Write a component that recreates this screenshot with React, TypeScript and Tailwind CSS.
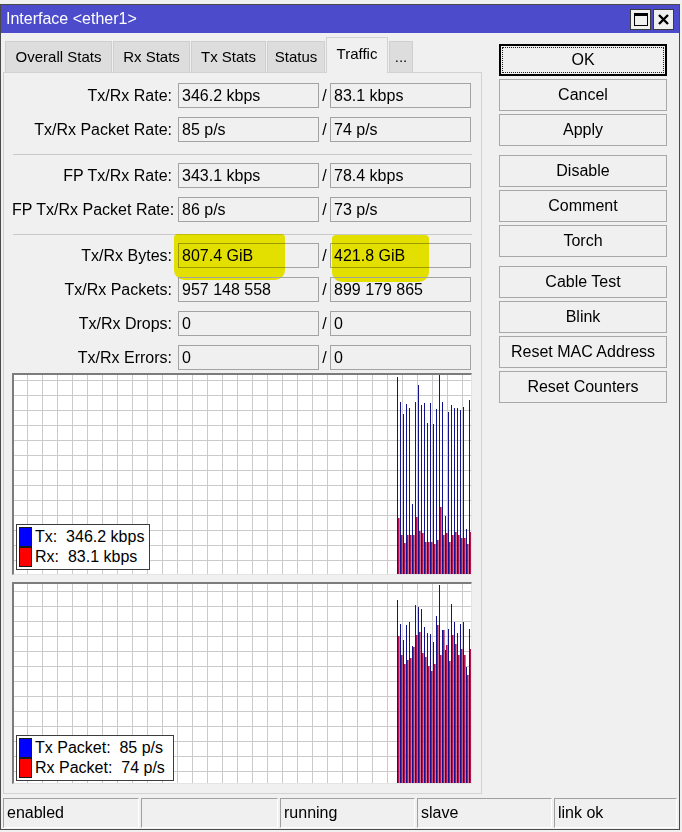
import React from 'react';

const FONT = { fontFamily: '"Liberation Sans", Arial, sans-serif' };

type Row = [string, string, string];

const groups: Row[][] = [
  [
    ['Tx/Rx Rate:', '346.2 kbps', '83.1 kbps'],
    ['Tx/Rx Packet Rate:', '85 p/s', '74 p/s'],
  ],
  [
    ['FP Tx/Rx Rate:', '343.1 kbps', '78.4 kbps'],
    ['FP Tx/Rx Packet Rate:', '86 p/s', '73 p/s'],
  ],
  [
    ['Tx/Rx Bytes:', '807.4 GiB', '421.8 GiB'],
    ['Tx/Rx Packets:', '957 148 558', '899 179 865'],
    ['Tx/Rx Drops:', '0', '0'],
    ['Tx/Rx Errors:', '0', '0'],
  ],
];

const tabs = [
  { label: 'Overall Stats', w: 'w-[107px]' },
  { label: 'Rx Stats', w: 'w-[77px]' },
  { label: 'Tx Stats', w: 'w-[75px]' },
  { label: 'Status', w: 'w-[58px]' },
  { label: 'Traffic', w: 'w-[62px]', active: true },
  { label: '...', w: 'w-[24px]' },
];

// absolute y of the bar tops, read from the screenshot
const rate = {
  top: 373,
  gridY: 5,
  tx: [377, 402, 414, 404, 408, 504, 402, 385, 405, 403, 423, 403, 424, 409, 375, 402, 516, 412, 405, 408, 408, 410, 407, 529, 400],
  rx: [518, 535, 543, 535, 535, 535, 517, 531, 533, 542, 542, 542, 544, 540, 507, 535, 533, 542, 535, 532, 535, 538, 538, 544, 532],
};

const packets = {
  top: 582,
  gridY: 7,
  tx: [600, 624, 640, 625, 622, 646, 605, 607, 609, 627, 633, 634, 642, 616, 585, 630, 650, 629, 604, 622, 633, 624, 622, 667, 629],
  rx: [636, 655, 664, 660, 658, 647, 635, 632, 653, 657, 666, 671, 664, 625, 655, 630, 645, 661, 635, 644, 655, 649, 655, 675, 649],
};

const Field: React.FC<{ row: Row; mark?: boolean }> = ({ row, mark }) => (
  <div className="flex h-[25px] items-center">
    <div className="w-[160px] whitespace-nowrap text-right text-[16px] text-black">{row[0]}</div>
    <div className="relative ml-[6px] h-[25px] w-[141px] border border-[#a3a3a3] px-[3px] text-[16px] leading-[23px] text-black">
      {mark && (
        <div className="absolute left-[-5px] top-[-10px] h-[46px] w-[111px] rounded-b-[10px] rounded-t-[4px] bg-[#f2ee00] mix-blend-multiply" />
      )}
      <span className="relative">{row[1]}</span>
    </div>
    <div className="w-[11px] text-center text-[16px] text-black">/</div>
    <div className="relative h-[25px] w-[141px] border border-[#a3a3a3] px-[3px] text-[16px] leading-[23px] text-black">
      {mark && (
        <div className="absolute left-[1px] top-[-9px] h-[47px] w-[97px] rounded-b-[10px] rounded-t-[4px] bg-[#f2ee00] mix-blend-multiply" />
      )}
      <span className="relative">{row[2]}</span>
    </div>
  </div>
);

const Graph: React.FC<{
  data: { top: number; gridY: number; tx: number[]; rx: number[] };
  legend: [string, string];
  legendW: string;
  legendPos: string;
}> = ({ data, legend, legendW, legendPos }) => {
  const W = 457;
  const H = 199;
  const origin = data.top + 2;
  const vLines = [];
  for (let x = 13; x < W; x += 15) vLines.push(x);
  const hLines = [];
  for (let y = data.gridY; y < H; y += 15) hLines.push(y);

  return (
    <div className="relative h-[202px] w-[460px] border-l-2 border-t-2 border-b border-r border-l-[#7c7c7c] border-t-[#7c7c7c] border-b-[#e4e4e4] border-r-[#e4e4e4] bg-white">
      <svg width={W} height={H} className="block">
        {vLines.map((x) => (
          <line key={'v' + x} x1={x + 0.5} y1={0} x2={x + 0.5} y2={H} stroke="#cbcbcb" strokeWidth={1} />
        ))}
        {hLines.map((y) => (
          <line key={'h' + y} x1={0} y1={y + 0.5} x2={W} y2={y + 0.5} stroke="#cbcbcb" strokeWidth={1} />
        ))}
        {data.tx.map((t, i) => {
          const x = 383 + i * 3;
          const rxTop = data.rx[i] - origin;
          return (
            <g key={i}>
              <rect x={x} y={t - origin} width={1} height={H - (t - origin)} fill="#12128a" />
              <rect x={x + 1} y={rxTop} width={1.6} height={H - rxTop} fill="#b3144f" />
            </g>
          );
        })}
      </svg>
      <div className={`absolute left-[2px] ${legendPos} ${legendW} border border-[#3c3c3c] bg-white py-[2px] pl-[2px]`}>
        {legend.map((l, i) => (
          <div key={l} className="flex h-[20px] items-center">
            <div className={`h-[20px] w-[13px] border border-[#1a1a1a] ${i === 0 ? 'bg-[#0000ff]' : 'bg-[#ff0000]'}`} />
            <span className="ml-[3px] whitespace-pre text-[16px] leading-[20px] text-black">{l}</span>
          </div>
        ))}
      </div>
    </div>
  );
};

const Btn: React.FC<{ label: string; focus?: boolean; extra?: string }> = ({ label, focus, extra }) =>
  focus ? (
    <div className={`relative flex h-[32px] w-[168px] items-center justify-center border-2 border-black bg-[#f0f0f0] text-[16px] text-black ${extra ?? ''}`}>
      <div className="absolute inset-[1px] border border-dotted border-[#202020]" />
      <span className="relative">{label}</span>
    </div>
  ) : (
    <div className={`flex h-[32px] w-[168px] items-center justify-center border border-[#a8a8a8] bg-[#f0f0f0] text-[16px] text-black ${extra ?? ''}`}>
      {label}
    </div>
  );

export default function App() {
  return (
    <div className="h-[832px] w-[682px] bg-[#f0f0f0] pt-[4px]" style={FONT}>
      <div className="flex h-[826px] w-[680px] flex-col border border-[#4a4a4a] bg-[#f0f0f0]">
        {/* Title bar */}
        <div className="flex h-[28px] items-center justify-between bg-[#4b4bcb] pl-[5px] pr-[5px]">
          <span className="text-[16px] text-white">Interface &lt;ether1&gt;</span>
          <div className="flex gap-[2px]">
            <div className="flex h-[21px] w-[21px] items-center justify-center border border-[#3a3a3a] bg-[#f0f0f0]">
              <div className="h-[13px] w-[14px] border border-t-[3px] border-black" />
            </div>
            <div className="flex h-[21px] w-[21px] items-center justify-center border border-[#3a3a3a] bg-[#f0f0f0]">
              <svg width="13" height="13" viewBox="0 0 13 13">
                <path d="M2 2 L11 11 M11 2 L2 11" stroke="#000" strokeWidth="2.4" />
              </svg>
            </div>
          </div>
        </div>

        {/* Body */}
        <div className="flex flex-1">
          <div className="flex w-[481px] flex-col">
            {/* Tabs */}
            <div className="ml-[4px] mt-[4px] flex h-[35px] items-end gap-[1px]">
              {tabs.map((t) =>
                t.active ? (
                  <div
                    key={t.label}
                    className={`relative z-10 -mb-[1px] flex h-[36px] ${t.w} items-center justify-center border border-b-0 border-[#d2d2d2] bg-[#f0f0f0] pb-[2px] text-[15px] text-black`}
                  >
                    {t.label}
                  </div>
                ) : (
                  <div
                    key={t.label}
                    className={`flex h-[31px] ${t.w} items-center justify-center border border-b-0 border-[#cfcfcf] bg-[#dddddd] text-[15px] text-black`}
                  >
                    {t.label}
                  </div>
                )
              )}
            </div>

            {/* Panel */}
            <div className="ml-[2px] flex h-[722px] w-[479px] flex-col border border-[#d2d2d2] bg-[#f0f0f0] pl-[8px] pt-[10px]">
              {groups.map((g, gi) => (
                <React.Fragment key={gi}>
                  {gi > 0 && <div className="mb-[8px] ml-[1px] mt-[12px] h-[1px] w-[459px] bg-[#c9c9c9]" />}
                  <div className="flex flex-col gap-[9px]">
                    {g.map((r) => (
                      <Field key={r[0]} row={r} mark={r[0] === 'Tx/Rx Bytes:'} />
                    ))}
                  </div>
                </React.Fragment>
              ))}
              <div className="mt-[3px] flex flex-col gap-[7px]">
                <Graph data={rate} legend={['Tx:  346.2 kbps', 'Rx:  83.1 kbps']} legendW="w-[134px]" legendPos="bottom-[4px]" />
                <Graph data={packets} legend={['Tx Packet:  85 p/s', 'Rx Packet:  74 p/s']} legendW="w-[158px]" legendPos="bottom-[2px]" />
              </div>
            </div>
          </div>

          {/* Buttons */}
          <div className="ml-[17px] flex flex-col gap-[3px] pt-[11px]">
            <Btn label="OK" focus />
            <Btn label="Cancel" />
            <Btn label="Apply" />
            <Btn label="Disable" extra="mt-[6px]" />
            <Btn label="Comment" />
            <Btn label="Torch" />
            <Btn label="Cable Test" extra="mt-[6px]" />
            <Btn label="Blink" />
            <Btn label="Reset MAC Address" />
            <Btn label="Reset Counters" />
          </div>
        </div>

        {/* Status bar */}
        <div className="mb-[1px] ml-[2px] flex h-[30px] gap-[2px]">
          {[
            ['enabled', 'w-[136px]'],
            ['', 'w-[137px]'],
            ['running', 'w-[135px]'],
            ['slave', 'w-[135px]'],
            ['link ok', 'w-[123px]'],
          ].map(([t, w], i) => (
            <div
              key={i}
              className={`${w} flex items-center border border-b-white border-l-[#a0a0a0] border-r-white border-t-[#a0a0a0] pl-[3px] text-[16px] text-black`}
            >
              {t}
            </div>
          ))}
        </div>
      </div>
    </div>
  );
}
